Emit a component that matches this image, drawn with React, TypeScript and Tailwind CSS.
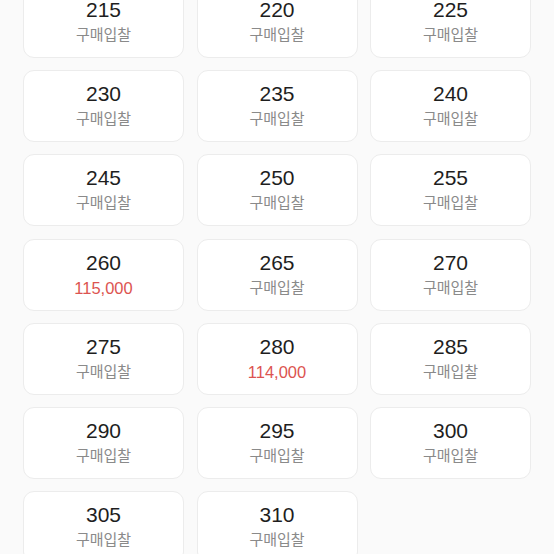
const items: { size: string; price?: string }[] = [
  { size: "215" }, { size: "220" }, { size: "225" },
  { size: "230" }, { size: "235" }, { size: "240" },
  { size: "245" }, { size: "250" }, { size: "255" },
  { size: "260", price: "115,000" }, { size: "265" }, { size: "270" },
  { size: "275" }, { size: "280", price: "114,000" }, { size: "285" },
  { size: "290" }, { size: "295" }, { size: "300" },
  { size: "305" }, { size: "310" },
];

export default function App() {
  return (
    <div className="w-[554px] h-[554px] overflow-hidden bg-[#fafafa]">
      <div className="grid grid-cols-3 gap-x-[12.5px] gap-y-[12.3px] px-[23px] mt-[-14.3px]">
        {items.map((it) => (
          <div
            key={it.size}
            className="h-[72px] rounded-[11px] bg-white border border-[#ececec] flex flex-col items-center justify-center"
          >
            <div
              className="text-[21px] leading-[25px] text-[#1e1e1e]"
              style={{ fontFamily: '"Liberation Sans", "Noto Sans CJK KR", sans-serif' }}
            >
              {it.size}
            </div>
            {it.price ? (
              <div
                className="mt-[1px] text-[16.5px] leading-[24px] text-[#dc5450]"
                style={{ fontFamily: '"Liberation Sans", "Noto Sans CJK KR", sans-serif' }}
              >
                {it.price}
              </div>
            ) : (
              <div
                className="mt-[1px] text-[15px] leading-[24px] text-[#8a8a8a]"
                style={{ fontFamily: '"Liberation Sans", "Noto Sans CJK KR", sans-serif' }}
              >
                구매입찰
              </div>
            )}
          </div>
        ))}
      </div>
    </div>
  );
}
